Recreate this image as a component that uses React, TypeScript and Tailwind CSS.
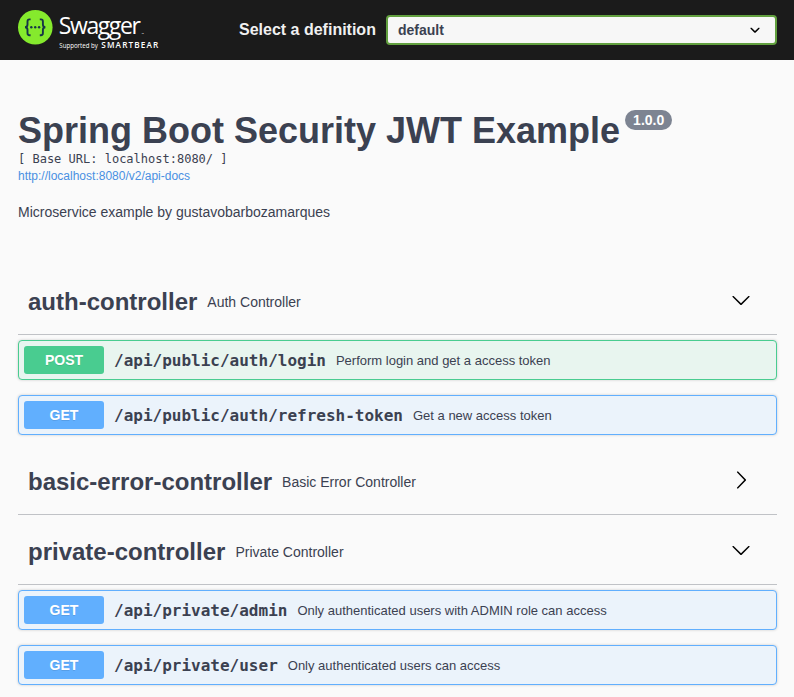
type Operation = { method: 'GET' | 'POST'; path: string; summary: string };
type Tag = { name: string; description: string; open: boolean; operations: Operation[] };

const tags: Tag[] = [
  {
    name: 'auth-controller',
    description: 'Auth Controller',
    open: true,
    operations: [
      { method: 'POST', path: '/api/public/auth/login', summary: 'Perform login and get a access token' },
      { method: 'GET', path: '/api/public/auth/refresh-token', summary: 'Get a new access token' },
    ],
  },
  { name: 'basic-error-controller', description: 'Basic Error Controller', open: false, operations: [] },
  {
    name: 'private-controller',
    description: 'Private Controller',
    open: true,
    operations: [
      { method: 'GET', path: '/api/private/admin', summary: 'Only authenticated users with ADMIN role can access' },
      { method: 'GET', path: '/api/private/user', summary: 'Only authenticated users can access' },
    ],
  },
];

function Logo() {
  return (
    <svg width="150" height="46" viewBox="0 0 150 46" aria-label="Swagger">
      <circle cx="17.3" cy="17.3" r="17.3" fill="#85ea2d" />
      <g fill="none" stroke="#173647" strokeWidth="1.9">
        <path d="M12.6 9.4H11.4Q9.5 9.4 9.5 11.4V14.6Q9.5 17.2 7 17.2Q9.5 17.2 9.5 19.8V23Q9.5 25.2 11.4 25.2H12.6" />
        <path d="M21.8 9.4H23Q24.9 9.4 24.9 11.4V14.6Q24.9 17.2 27.4 17.2Q24.9 17.2 24.9 19.8V23Q24.9 25.2 23 25.2H21.8" />
      </g>
      <g fill="#173647">
        <circle cx="13.3" cy="17.3" r="1.2" />
        <circle cx="17.2" cy="17.3" r="1.2" />
        <circle cx="21.1" cy="17.3" r="1.2" />
      </g>
      <g fill="#ffffff" className="font-['Open_Sans',sans-serif]">
        <text x="40.8" y="24.4" fontSize="23" textLength="82" lengthAdjust="spacing">Swagger</text>
        <text x="123.5" y="24.5" fontSize="3">™</text>
        <text x="41.3" y="38.3" fontSize="6.6" textLength="38.5" lengthAdjust="spacingAndGlyphs">Supported by</text>
        <text x="83.3" y="38.3" fontSize="8.2" fontWeight="600" textLength="57" lengthAdjust="spacing">SMARTBEAR</text>
      </g>
    </svg>
  );
}

function Arrow({ open }: { open: boolean }) {
  return (
    <svg className="mb-1" width="20" height="20" viewBox="0 0 20 20" fill="black">
      {open ? (
        <path d="M17.418 6.109c.272-.268.709-.268.979 0s.271.701 0 .969l-7.908 7.83c-.27.268-.707.268-.979 0l-7.908-7.83c-.27-.268-.27-.701 0-.969.271-.268.709-.268.979 0L10 13.25l7.418-7.141z" />
      ) : (
        <path d="M13.25 10L6.109 2.58c-.268-.27-.268-.707 0-.979.268-.27.701-.27.969 0l7.83 7.908c.268.271.268.709 0 .979l-7.83 7.908c-.268.271-.701.27-.969 0-.268-.269-.268-.707 0-.979L13.25 10z" />
      )}
    </svg>
  );
}

function OperationRow({ op }: { op: Operation }) {
  const post = op.method === 'POST';
  return (
    <div
      className={`flex h-10 items-center rounded border p-[5px] shadow-[0_0_3px_rgba(0,0,0,0.19)] ${
        post ? 'border-[#49cc90] bg-[#e8f5ef]' : 'border-[#61affe] bg-[#ebf3fb]'
      }`}
    >
      <span
        className={`w-20 rounded-[3px] py-[6px] text-center text-sm leading-[16px] font-bold text-white [text-shadow:0_1px_0_rgba(0,0,0,0.1)] ${
          post ? 'bg-[#49cc90]' : 'bg-[#61affe]'
        }`}
      >
        {op.method}
      </span>
      <span className="px-[10px] pt-[2px] font-['DejaVu_Sans_Mono',monospace] text-base font-semibold">{op.path}</span>
      <span className="pt-[2px] text-[13px]">{op.summary}</span>
    </div>
  );
}

export default function App() {
  return (
    <div className="h-[697px] overflow-hidden bg-[#fafafa] font-['Liberation_Sans',Arial,sans-serif] text-[#3b4151]">
      <header className="flex h-[60px] items-center bg-[#1b1b1b] pr-[17px] pl-[18px]">
        <div className="flex h-full w-[221px] items-start pt-[10px]">
          <Logo />
        </div>
        <label className="flex flex-1 items-center">
          <span className="w-[147px] text-base font-bold text-[#f0f0f0]">Select a definition</span>
          <span className="flex h-[30px] flex-1 items-center justify-between rounded border-2 border-[#62a03f] bg-[#f7f7f7] pr-[10px] pl-[10px] text-sm font-bold">
            default
            <svg width="20" height="20" viewBox="0 0 20 20" fill="black">
              <path d="M13.418 7.859c.271-.268.709-.268.978 0 .27.268.272.701 0 .969l-3.908 3.83c-.27.268-.707.268-.979 0l-3.908-3.83c-.27-.267-.27-.701 0-.969.271-.268.709-.268.978 0L10 11l3.418-3.141z" />
            </svg>
          </span>
        </label>
      </header>
      <main className="pr-[17px] pl-[18px]">
        <section className="h-[211px] pt-[50px]">
          <h2 className="flex items-start text-4xl leading-[41px] font-bold">
            Spring Boot Security JWT Example
            <span className="ml-[5px] h-5 rounded-full bg-[#7d8492] px-2 text-sm leading-5 text-white">1.0.0</span>
          </h2>
          <pre className="mt-px font-['DejaVu_Sans_Mono',monospace] text-xs leading-[15px]">[ Base URL: localhost:8080/ ]</pre>
          <a className="block text-xs leading-[18px] text-[#4990e2]">http://localhost:8080/v2/api-docs</a>
          <p className="mt-[19px] text-sm leading-4">Microservice example by gustavobarbozamarques</p>
        </section>
        {tags.map((tag) => (
          <section key={tag.name}>
            <h3 className="flex h-16 items-center border-b border-[#3b4151]/30 pr-[26px] pb-[2px] pl-[10px] text-2xl font-bold">
              {tag.name}
              <small className="flex-1 px-[10px] text-sm font-normal">{tag.description}</small>
              <Arrow open={tag.open} />
            </h3>
            <div className={`flex flex-col gap-[15px] pt-[5px] ${tag.open ? 'pb-4' : ''}`}>
              {tag.operations.map((op) => (
                <OperationRow key={op.path} op={op} />
              ))}
            </div>
            {!tag.open && <div className="h-px" />}
          </section>
        ))}
      </main>
    </div>
  );
}
